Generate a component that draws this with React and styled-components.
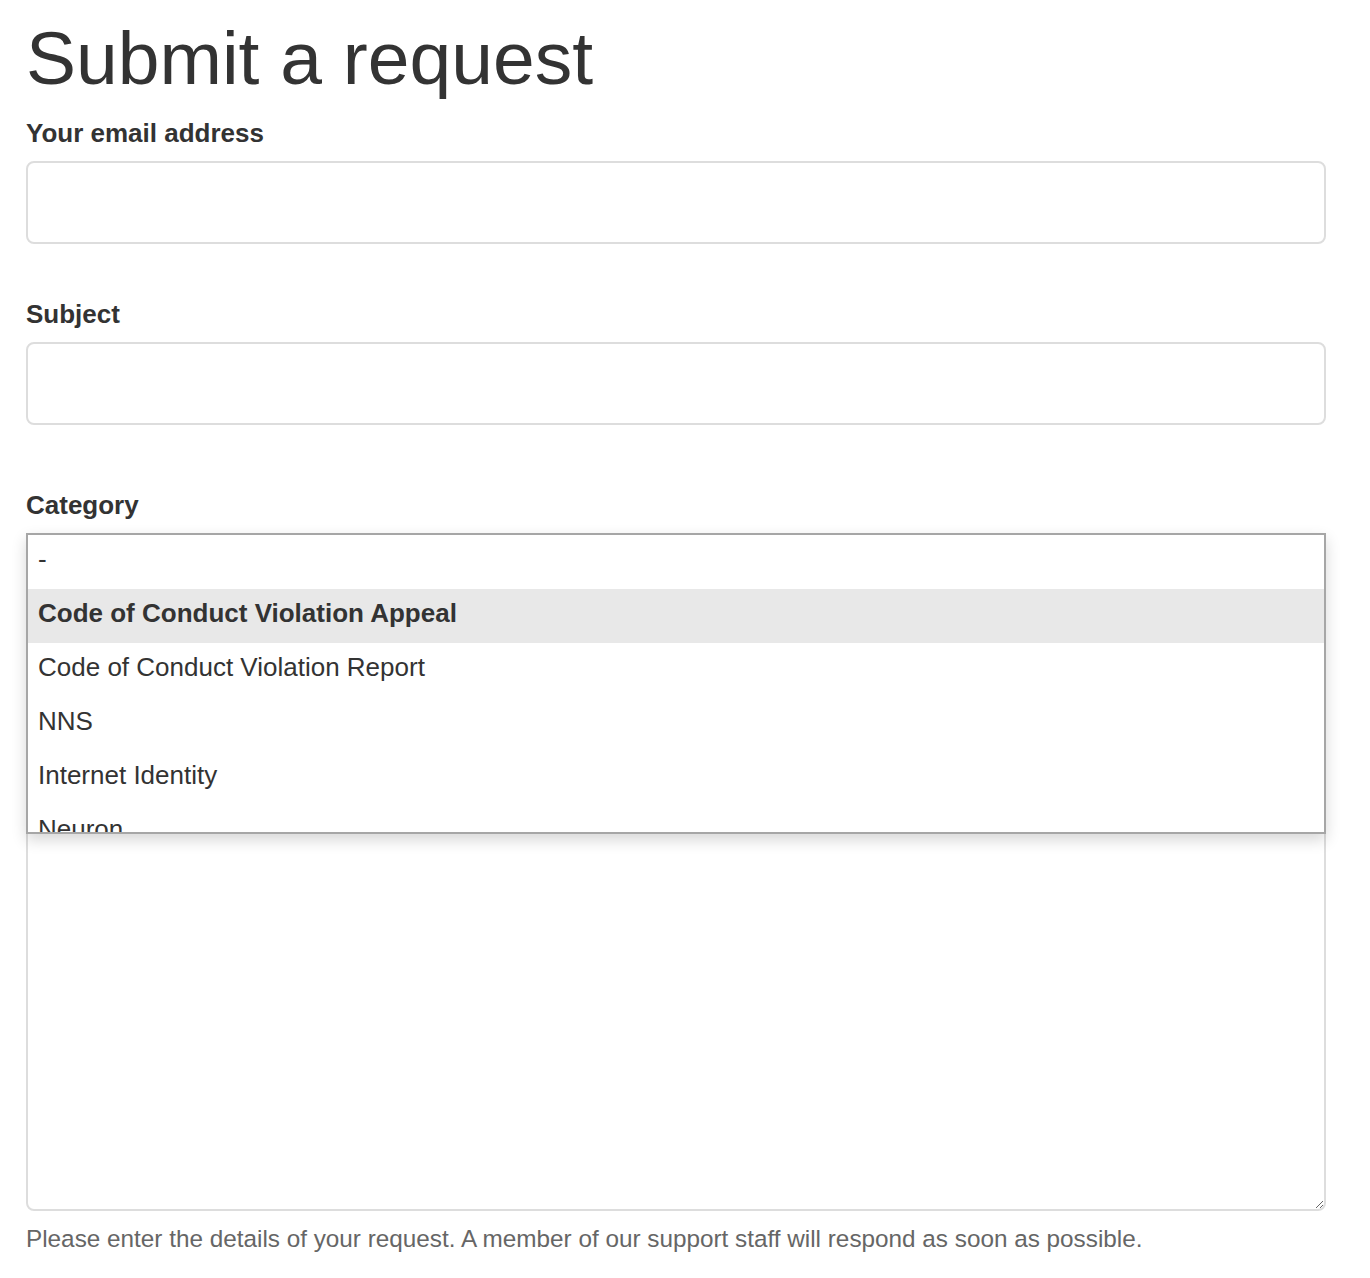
import React from 'react';
import styled, { createGlobalStyle } from 'styled-components';

const GlobalStyle = createGlobalStyle`
  html, body {
    margin: 0;
    padding: 0;
    background: #fff;
    font-family: "Liberation Sans", Arial, Helvetica, sans-serif;
    color: #333;
  }
  * { box-sizing: border-box; }
`;

const Page = styled.div`
  width: 1300px;
  margin-left: 26px;
  padding-top: 17px;
`;

const Title = styled.h1`
  margin: 0 0 19px;
  font-size: 75px;
  line-height: 82px;
  font-weight: 400;
  color: #333;
`;

const Field = styled.div`
  position: relative;
  margin-bottom: ${({ $after }) => $after}px;
`;

const Label = styled.label`
  display: block;
  margin-bottom: 13px;
  font-size: 26px;
  line-height: 30px;
  font-weight: 700;
  color: #333;
`;

const Input = styled.input`
  display: block;
  width: 100%;
  height: 83px;
  padding: 0 18px;
  border: 2px solid #ddd;
  border-radius: 8px;
  font: inherit;
  font-size: 26px;
  outline: none;
`;

const SelectBox = styled.div`
  height: 83px;
  border: 2px solid #ddd;
  border-radius: 8px;
`;

const Textarea = styled.textarea`
  display: block;
  width: 100%;
  height: 487px;
  border: 2px solid #ddd;
  border-radius: 8px;
  font: inherit;
  font-size: 26px;
  outline: none;
  resize: vertical;
`;

const Hint = styled.p`
  margin: 14px 0 0;
  font-size: 24.3px;
  line-height: 28px;
  color: #666;
`;

const Menu = styled.ul`
  position: absolute;
  left: 0;
  right: 0;
  top: 43px;
  z-index: 5;
  height: 301px;
  margin: 0;
  padding: 0;
  list-style: none;
  overflow: hidden;
  background: #fff;
  border: 2px solid #a6a6a6;
  box-shadow: 0 6px 14px rgba(0, 0, 0, 0.16);
`;

const Option = styled.li`
  height: 54px;
  padding: 0 10px;
  font-size: 26px;
  line-height: 48px;
  color: #333;
  white-space: nowrap;
  font-weight: ${({ $active }) => ($active ? 700 : 400)};
  background: ${({ $active }) => ($active ? '#e8e8e8' : 'transparent')};
`;

const categories = [
  '-',
  'Code of Conduct Violation Appeal',
  'Code of Conduct Violation Report',
  'NNS',
  'Internet Identity',
  'Neuron',
  'Other',
];

export default function App() {
  return (
    <>
      <GlobalStyle />
      <Page>
        <Title>Submit a request</Title>
        <Field $after={55}>
          <Label>Your email address</Label>
          <Input type="email" />
        </Field>
        <Field $after={65}>
          <Label>Subject</Label>
          <Input type="text" />
        </Field>
        <Field $after={65}>
          <Label>Category</Label>
          <SelectBox />
          <Menu>
            {categories.map((c, i) => (
              <Option key={c} $active={i === 1}>{c}</Option>
            ))}
          </Menu>
        </Field>
        <Field $after={0}>
          <Label>Description</Label>
          <Textarea />
          <Hint>Please enter the details of your request. A member of our support staff will respond as soon as possible.</Hint>
        </Field>
      </Page>
    </>
  );
}
